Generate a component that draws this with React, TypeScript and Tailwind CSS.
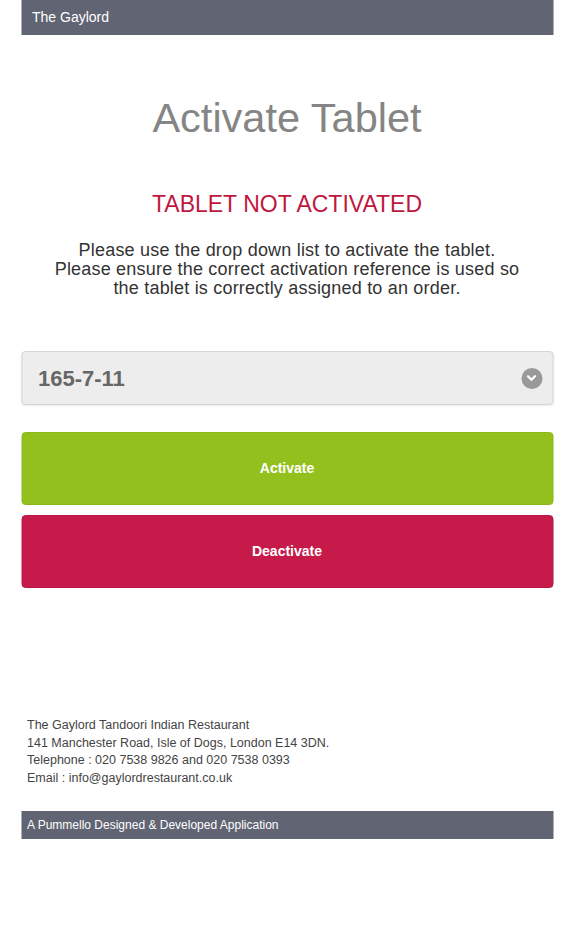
import { ChevronDown } from "lucide-react";

export default function App() {
  return (
    <div className="min-h-[948px] bg-white font-['Liberation_Sans',Arial,sans-serif]">
      <div className="mx-auto w-[532px] -translate-x-[0.5px]">
        {/* Top bar */}
        <div className="flex h-[35px] items-center bg-[#616473] px-[11px] text-[14px] text-white">
          The Gaylord
        </div>

        {/* Heading */}
        <h1 className="mt-[59px] text-center text-[41.5px] leading-[48px] text-[#858585]">
          Activate Tablet
        </h1>
        <h2 className="mt-[49px] text-center text-[23px] leading-[26px] text-[#c0173f]">
          TABLET NOT ACTIVATED
        </h2>
        <p className="mt-[24px] px-[10px] text-center text-[18px] leading-[19px] tracking-[0.2px] text-[#333]">
          Please use the drop down list to activate the tablet.
          <br />
          Please ensure the correct activation reference is used so
          <br />
          the tablet is correctly assigned to an order.
        </p>

        {/* Select */}
        <div className="mt-[53px] flex h-[54px] items-center justify-between rounded-[4px] border border-[#d6d6d6] bg-[#ededed] pl-[16px] pr-[10px] shadow-[0_1px_2px_rgba(0,0,0,0.08)]">
          <span className="text-[22px] font-bold text-[#666]">165-7-11</span>
          <span className="flex h-[21px] w-[21px] items-center justify-center rounded-full bg-[#999]">
            <ChevronDown size={14} strokeWidth={4} className="text-white" />
          </span>
        </div>

        {/* Buttons */}
        <div className="mt-[27px] flex flex-col gap-[10px]">
          <button className="flex h-[73px] w-full items-center justify-center rounded-[4px] border border-[#8ab81a] bg-[#93c01c] text-[14px] font-bold text-white">
            Activate
          </button>
          <button className="flex h-[73px] w-full items-center justify-center rounded-[4px] border border-[#b8164a] bg-[#c51a4a] text-[14px] font-bold text-white">
            Deactivate
          </button>
        </div>

        {/* Address */}
        <div className="mt-[129px] px-[6px] text-[12.5px] leading-[17.5px] text-[#444]">
          <p>The Gaylord Tandoori Indian Restaurant</p>
          <p>141 Manchester Road, Isle of Dogs, London E14 3DN.</p>
          <p>Telephone : 020 7538 9826 and 020 7538 0393</p>
          <p>Email : info@gaylordrestaurant.co.uk</p>
        </div>

        {/* Footer bar */}
        <div className="mt-[24px] flex h-[28px] items-center bg-[#616473] px-[6px] text-[12px] text-white">
          A Pummello Designed &amp; Developed Application
        </div>
      </div>
    </div>
  );
}
